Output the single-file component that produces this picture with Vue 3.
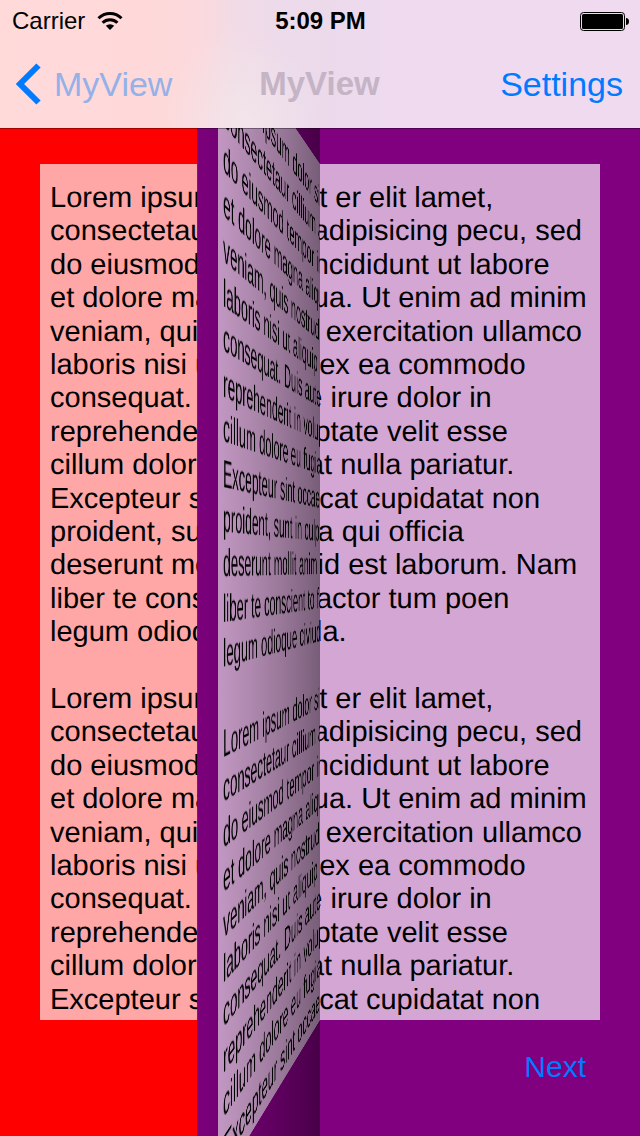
<script setup>
const paragraph = [
  'Lorem ipsum dolor sit er elit lamet,',
  'consectetaur cillium adipisicing pecu, sed',
  'do eiusmod tempor incididunt ut labore',
  'et dolore magna aliqua. Ut enim ad minim',
  'veniam, quis nostrud exercitation ullamco',
  'laboris nisi ut aliquip ex ea commodo',
  'consequat. Duis aute irure dolor in',
  'reprehenderit in voluptate velit esse',
  'cillum dolore eu fugiat nulla pariatur.',
  'Excepteur sint occaecat cupidatat non',
  'proident, sunt in culpa qui officia',
  'deserunt mollit anim id est laborum. Nam',
  'liber te conscient to factor tum poen',
  'legum odioque civiuda.'
]
const lines = [...paragraph, '', ...paragraph.slice(0, 10)]

// Painted back to front: the page being covered, the settled half, the turning half.
const sheets = [
  { name: 'under', next: false },
  { name: 'settled', next: true },
  { name: 'turning', next: false }
]
</script>

<template>
  <div class="screen">
    <header class="bar">
      <div class="status">
        <div class="carrier">
          <span>Carrier</span>
          <svg class="wifi" viewBox="0 0 26 20" aria-hidden="true">
            <path d="M1.500 7.300a16.300 16.300 0 0 1 23 0" />
            <path d="M5.600 11.800a10.500 10.500 0 0 1 14.800 0" />
            <path class="dot" d="M8.800 14.800a6.200 6.200 0 0 1 8.400 0L13 19z" />
          </svg>
        </div>
        <span class="time">5:09 PM</span>
        <svg class="battery" viewBox="0 0 49 20" aria-hidden="true">
          <rect x="0.500" y="1.500" width="44" height="18" rx="3" fill="none" stroke="#000" />
          <rect x="2" y="3" width="41" height="15" rx="1.500" />
          <path d="M46 7c2 0 3 1.500 3 3.500S48 14 46 14z" />
        </svg>
      </div>
      <nav class="nav">
        <button class="back" type="button">
          <svg viewBox="0 0 26 42" aria-hidden="true">
            <path d="M22.500 2.500 4 21l18.500 18.500" />
          </svg>
          <span>MyView</span>
        </button>
        <h1>MyView</h1>
        <button class="settings" type="button">Settings</button>
      </nav>
    </header>

    <main class="stage">
      <section
        v-for="sheet in sheets"
        :key="sheet.name"
        class="sheet"
        :class="sheet.name"
        :aria-hidden="!sheet.next"
      >
        <div class="panel">
          <div v-for="(line, i) in lines" :key="i" class="line">{{ line }}</div>
        </div>
        <div v-if="sheet.next" class="foot">
          <button class="next" type="button">Next</button>
        </div>
      </section>
    </main>
  </div>
</template>

<style>
body {
  background: #800080;
}
</style>

<style scoped>
.screen {
  position: relative;
  min-height: 100vh;
  display: grid;
  overflow: hidden;
  font-family: "Liberation Sans", Arial, Helvetica, sans-serif;
  color: #000;
}

button {
  border: 0;
  padding: 0;
  background: none;
  font: inherit;
  color: #007aff;
  cursor: pointer;
}

.bar {
  position: absolute;
  inset: 0 0 auto;
  z-index: 2;
  border-bottom: 1px solid rgba(0, 0, 0, 0.35);
  background:
    radial-gradient(ellipse 12% 80% at 38% 100%, rgba(242, 230, 234, 0.9), rgba(242, 230, 234, 0)),
    linear-gradient(
      90deg,
      #ffdad9 0%,
      #ffd9d9 23%,
      #fcd9dd 31%,
      #f1dbe6 37%,
      #eddaea 43%,
      #ecdaec 52%,
      #f0daf0 63%,
      #f0daf0 100%
    );
  background-clip: padding-box;
}

.status {
  display: grid;
  grid-template-columns: 1fr auto 1fr;
  align-items: center;
  height: 40px;
  padding: 0 11px 0 12px;
  box-sizing: border-box;
  font-size: 24px;
  line-height: 42px;
}

.carrier {
  display: flex;
  align-items: center;
  gap: 12px;
}

.wifi {
  width: 26px;
  height: 20px;
  fill: none;
  stroke: #000;
  stroke-width: 3;
}

.wifi .dot {
  fill: #000;
  stroke: none;
}

.time {
  font-size: 24px;
  font-weight: 700;
}

.battery {
  justify-self: end;
  width: 49px;
  height: 20px;
}

.nav {
  display: grid;
  grid-template-columns: 1fr auto 1fr;
  align-items: center;
  height: 88px;
  padding: 0 17px 0 16px;
  box-sizing: border-box;
  font-size: 34px;
  line-height: 40px;
}

.back {
  display: flex;
  align-items: center;
  gap: 12px;
  color: #94b1e8;
}

.back svg {
  width: 26px;
  height: 42px;
  fill: none;
  stroke: #007aff;
  stroke-width: 6;
}

h1 {
  margin: 0;
  font-size: 33px;
  line-height: 42px;
  font-weight: 700;
  color: #c4b4c6;
}

.settings {
  justify-self: end;
}

.stage {
  display: grid;
  perspective: 1000px;
  perspective-origin: 50% 50%;
}

.sheet {
  position: relative;
  grid-area: 1 / 1;
  display: grid;
  grid-template-rows: 1fr 116px;
  padding: 164px 40px 0;
  background: #800080;
}

.under {
  background: #f00;
}

.settled {
  clip-path: inset(0 0 0 50%);
}

.turning {
  clip-path: inset(0 50% 0 0);
  transform: rotateY(74.6deg);
}

.turning::after {
  content: "";
  position: absolute;
  inset: 0 50% 0 0;
  background: linear-gradient(90deg, rgba(0, 0, 0, 0.04), rgba(0, 0, 0, 0.44));
}

.panel {
  display: grid;
  grid-auto-rows: 1fr;
  padding: 18px 10px 3px;
  background: #d4a6d4;
  font-size: 29px;
  line-height: 33px;
  white-space: nowrap;
  overflow: hidden;
  text-rendering: geometricPrecision;
}

.under .panel {
  background: #ffa6a6;
}

.foot {
  display: flex;
  justify-content: flex-end;
  align-items: flex-start;
  padding: 30px 14px 0 0;
}

.next {
  font-size: 30px;
  line-height: 34px;
}
</style>
